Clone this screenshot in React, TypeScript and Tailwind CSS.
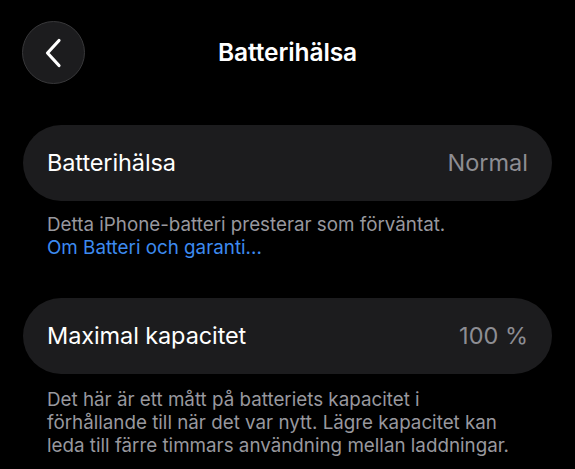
import React from "react";

const Row = ({ label, value }: { label: string; value: string }) => (
  <div className="flex items-center justify-between h-[76px] rounded-full bg-[#1c1c1e] pl-6 pr-6">
    <span className="text-[23.5px] text-white tracking-[-0.1px]">{label}</span>
    <span className="text-[23.5px] text-[#8d8d93]">{value}</span>
  </div>
);

const App = () => {
  return (
    <div
      className="w-[575px] h-[469px] bg-black overflow-hidden"
      style={{ fontFamily: "Inter, 'Noto Sans', sans-serif" }}
    >
      <div className="relative flex items-center justify-center h-[64px] mt-5">
        <button className="absolute left-[22px] top-[1px] w-[63px] h-[63px] rounded-full bg-[#1c1c1e] border border-[#38383a] flex items-center justify-center">
          <svg width="18" height="30" viewBox="0 0 18 30" fill="none" className="-ml-[2px]">
            <path
              d="M15 2.5 L3.5 15 L15 27.5"
              stroke="white"
              strokeWidth="3.2"
              strokeLinecap="round"
              strokeLinejoin="round"
            />
          </svg>
        </button>
        <h1 className="text-[24.5px] font-semibold text-white tracking-[-0.1px]">Batterihälsa</h1>
      </div>

      <div className="px-[23px] mt-[41px]">
        <Row label="Batterihälsa" value="Normal" />
        <div className="px-6 pt-[12px] text-[18.8px] leading-[23px] text-[#98989e]">
          <p>Detta iPhone-batteri presterar som förväntat.</p>
          <p className="text-[#3d8bf0]">Om Batteri och garanti...</p>
        </div>

        <div className="mt-[39px]">
          <Row label="Maximal kapacitet" value="100 %" />
        </div>
        <div className="px-6 pt-[14px] text-[18.8px] leading-[23px] text-[#98989e]">
          <p>
            Det här är ett mått på batteriets kapacitet i
            <br />
            förhållande till när det var nytt. Lägre kapacitet kan
            <br />
            leda till färre timmars användning mellan laddningar.
          </p>
        </div>
      </div>
    </div>
  );
};

export default App;
